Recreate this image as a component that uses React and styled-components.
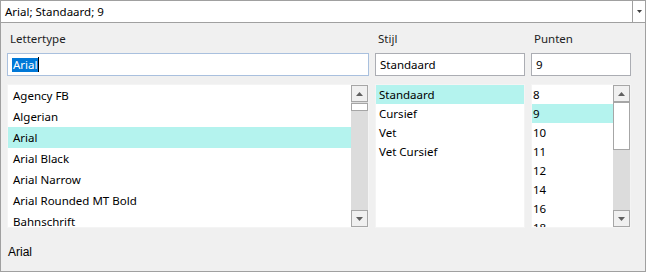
import React from "react";
import styled, { createGlobalStyle } from "styled-components";

const Global = createGlobalStyle`
  html, body { margin: 0; padding: 0; background: #f0f0f0; }
  body { font-family: "Noto Sans", "Open Sans", sans-serif; }
`;

const Frame = styled.div`
  width: 646px;
  height: 272px;
  box-sizing: border-box;
  border: 1px solid #a0a0a0;
  background: #f0f0f0;
  display: flex;
  flex-direction: column;
`;

const Combo = styled.div`
  height: 22px;
  box-sizing: border-box;
  border-bottom: 1px solid #a0a0a0;
  background: #fff;
  display: flex;
  align-items: stretch;
`;

const ComboText = styled.div`
  flex: 1;
  padding-left: 4px;
  font-size: 11.5px;
  line-height: 21px;
  color: #000;
`;

const ComboButton = styled.div`
  width: 12px;
  border-left: 1px solid #a0a0a0;
  display: flex;
  align-items: center;
  justify-content: center;
`;

const Panel = styled.div`
  flex: 1;
  padding: 8px 0 0 6px;
  display: grid;
  grid-template-columns: 362px 150px 100px;
  column-gap: 6px;
  grid-template-rows: auto auto auto auto;
  align-content: start;
`;

const Label = styled.div`
  font-size: 11.5px;
  line-height: 16px;
  height: 16px;
  color: #1e1e1e;
  padding-left: 3px;
`;

const Input = styled.div`
  margin-top: 6px;
  height: 23px;
  box-sizing: border-box;
  border: 1px solid ${(p) => (p.$focused ? "#a9c0de" : "#abadb3")};
  background: #fff;
  font-size: 11.5px;
  line-height: 21px;
  padding-left: 4px;
  color: #000;
  display: flex;
  align-items: center;
`;

const Selected = styled.span`
  background: #0078d7;
  color: #fff;
  line-height: 14px;
  padding: 0 1px;
`;

const Caret = styled.span`
  display: inline-block;
  width: 1px;
  height: 15px;
  background: #000;
`;

const ListBox = styled.div`
  margin-top: 8px;
  height: 144px;
  box-sizing: border-box;
  border: 1px solid #f4f4f4;
  background: #fff;
  display: flex;
  overflow: hidden;
`;

const Items = styled.div`
  flex: 1;
  overflow: hidden;
`;

const Item = styled.div`
  height: ${(p) => p.$h}px;
  line-height: ${(p) => p.$h}px;
  padding-left: ${(p) => p.$pad}px;
  font-size: 11.5px;
  color: #000;
  white-space: nowrap;
  background: ${(p) => (p.$sel ? "#b4f3ee" : "transparent")};
`;

const Scroll = styled.div`
  width: 17px;
  display: flex;
  flex-direction: column;
  background: #dcdcdc;
`;

const ArrowBtn = styled.div`
  height: 17px;
  box-sizing: border-box;
  border: 1px solid #a6a6a6;
  background: #f0f0f0;
  display: flex;
  align-items: center;
  justify-content: center;
`;

const Track = styled.div`
  flex: 1;
  display: flex;
  flex-direction: column;
`;

const Thumb = styled.div`
  box-sizing: border-box;
  border: 1px solid #a6a6a6;
  background: #fff;
`;

const Preview = styled.div`
  grid-column: 1 / 4;
  margin-top: 16px;
  font-family: "Liberation Sans", Arial, sans-serif;
  font-size: 12px;
  line-height: 16px;
  color: #000;
  padding-left: 1px;
`;

const Tri = ({ up }) => (
  <svg width="7" height="4" viewBox="0 0 7 4">
    <path d={up ? "M0 4 L3.5 0 L7 4 Z" : "M0 0 L7 0 L3.5 4 Z"} fill="#606060" />
  </svg>
);

const Scrollbar = ({ gap, thumb }) => (
  <Scroll>
    <ArrowBtn><Tri up /></ArrowBtn>
    <Track>
      <Thumb style={{ marginTop: gap, height: thumb }} />
    </Track>
    <ArrowBtn><Tri /></ArrowBtn>
  </Scroll>
);

const fonts = ["Agency FB", "Algerian", "Arial", "Arial Black", "Arial Narrow", "Arial Rounded MT Bold", "Bahnschrift"];
const styles = ["Standaard", "Cursief", "Vet", "Vet Cursief"];
const sizes = ["8", "9", "10", "11", "12", "14", "16", "18"];

export default function App() {
  return (
    <>
      <Global />
      <Frame>
        <Combo>
          <ComboText>Arial; Standaard; 9</ComboText>
          <ComboButton>
            <svg width="5" height="3" viewBox="0 0 5 3">
              <path d="M0 0 L5 0 L2.5 3 Z" fill="#404040" />
            </svg>
          </ComboButton>
        </Combo>
        <Panel>
          <Label>Lettertype</Label>
          <Label>Stijl</Label>
          <Label>Punten</Label>
          <Input $focused>
            <Selected>Arial</Selected>
            <Caret />
          </Input>
          <Input>Standaard</Input>
          <Input>9</Input>
          <ListBox>
            <Items>
              {fonts.map((f) => (
                <Item key={f} $h={21} $pad={5} $sel={f === "Arial"}>{f}</Item>
              ))}
            </Items>
            <Scrollbar gap={1} thumb={8} />
          </ListBox>
          <ListBox>
            <Items>
              {styles.map((s) => (
                <Item key={s} $h={19} $pad={3} $sel={s === "Standaard"}>{s}</Item>
              ))}
            </Items>
          </ListBox>
          <ListBox>
            <Items>
              {sizes.map((s) => (
                <Item key={s} $h={19} $pad={1} $sel={s === "9"}>{s}</Item>
              ))}
            </Items>
            <Scrollbar gap={0} thumb={48} />
          </ListBox>
          <Preview>Arial</Preview>
        </Panel>
      </Frame>
    </>
  );
}
